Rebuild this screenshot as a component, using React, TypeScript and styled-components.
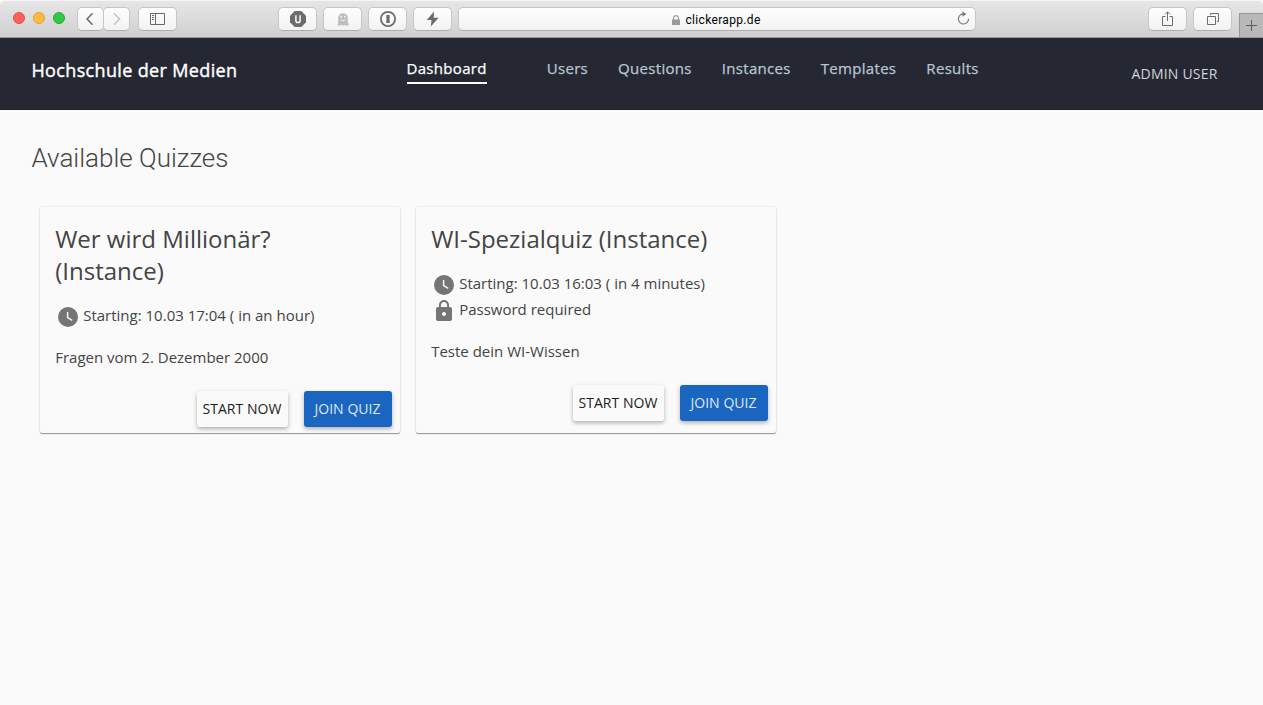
import React from "react";
import styled, { createGlobalStyle } from "styled-components";

const GlobalStyle = createGlobalStyle`
  * { box-sizing: border-box; }
  body { margin: 0; background: #fafafa; font-family: "Open Sans", sans-serif; color: #444; }
`;

const Page = styled.div`
  min-height: 705px;
  display: flex;
  flex-direction: column;
  background: #fafafa;
`;

const Toolbar = styled.div`
  height: 38px;
  display: flex;
  align-items: flex-start;
  border-top: 1px solid #f5f5f5;
  border-bottom: 1px solid #969696;
  border-radius: 5px 5px 0 0;
  background: linear-gradient(#e6e6e6, #d0d0d0);
`;

const Lights = styled.div`
  display: flex;
  gap: 8px;
  padding: 11px 0 0 13px;
  width: 77px;
`;

const Light = styled.span<{ $fill: string; $edge: string }>`
  width: 12px;
  height: 12px;
  border-radius: 50%;
  background: ${(p) => p.$fill};
  border: 1px solid ${(p) => p.$edge};
`;

const ToolButton = styled.button<{ $width?: number; $left?: number }>`
  width: ${(p) => p.$width ?? 39}px;
  height: 24px;
  margin: 6px 0 0 ${(p) => p.$left ?? 0}px;
  padding: 0;
  display: flex;
  align-items: center;
  justify-content: center;
  flex: none;
  border: 1px solid #c6c6c6;
  border-bottom-color: #adadad;
  border-radius: 5px;
  background: linear-gradient(#fefefe, #f2f2f2);
`;

const AddressBar = styled.div`
  position: relative;
  width: 518px;
  height: 24px;
  margin: 6px 0 0 6px;
  padding: 1px 1px 0 0;
  display: flex;
  align-items: center;
  justify-content: center;
  gap: 5px;
  flex: none;
  border: 1px solid #c6c6c6;
  border-bottom-color: #adadad;
  border-radius: 5px;
  background: linear-gradient(#fefefe, #f2f2f2);
  font: 12px Roboto, sans-serif;
  letter-spacing: 0.33px;
  color: #000;
`;

const Reload = styled.svg`
  position: absolute;
  right: 5px;
  top: 3px;
`;

const NewTab = styled.button`
  width: 24px;
  height: 24px;
  margin: 12px 0 0 auto;
  padding: 0;
  display: flex;
  align-items: center;
  justify-content: center;
  border: solid #969696;
  border-width: 1px 0 0 1px;
  background: #b8b8b8;
`;

const Header = styled.header`
  height: 72px;
  display: flex;
  align-items: flex-start;
  background: #252833;
  border-bottom: 1px solid #1f212c;
`;

const Brand = styled.div`
  width: 375px;
  padding: 20px 0 0 31.5px;
  font-size: 18px;
  line-height: 24px;
  letter-spacing: 0.35px;
  -webkit-text-stroke: 0.4px #fff;
  color: #fff;
`;

const Nav = styled.nav`
  display: flex;
  gap: 30px;
  padding-left: 31.5px;
  padding-top: 20px;
`;

const NavItem = styled.a<{ $active?: boolean }>`
  height: 26px;
  margin-right: ${(p) => (p.$active ? 30 : 0)}px;
  border-bottom: 2px solid ${(p) => (p.$active ? "#fff" : "transparent")};
  color: ${(p) => (p.$active ? "#fff" : "#b9c6d2")};
  font-size: 15px;
  line-height: 21px;
  letter-spacing: 0.31px;
  -webkit-text-stroke: 0.25px currentColor;
  white-space: nowrap;
`;

const User = styled.div`
  margin-left: auto;
  padding: 26px 45.5px 0 0;
  font-size: 14px;
  line-height: 20px;
  letter-spacing: 0.2px;
  color: #d3d4d6;
  white-space: nowrap;
`;

const Main = styled.main`
  padding: 32px;
`;

const Heading = styled.h1`
  margin: 0 0 0 -0.5px;
  font: 300 26px/32px Roboto, sans-serif;
  color: #444;
`;

const Cards = styled.div`
  display: flex;
  gap: 16px;
  padding: 33px 8px 0;
`;

const Card = styled.article`
  width: 360px;
  padding: 16px 0 6px;
  border-radius: 2px;
  box-shadow: 0 1px 1px rgba(0, 0, 0, 0.38), 0 0 2px rgba(0, 0, 0, 0.16);
`;

const CardTitle = styled.h2`
  width: 300px;
  margin: 0 0 15px 15.2px;
  font-size: 24px;
  line-height: 32px;
  font-weight: 400;
`;

const Info = styled.div`
  height: 26px;
  padding-left: 15.5px;
  display: flex;
  align-items: center;
  gap: 3.7px;
  font-size: 15px;
  white-space: nowrap;

  svg { margin-top: 3px; }
`;

const Description = styled.p`
  margin: 17px 0 0 15.2px;
  font-size: 15px;
  line-height: 24px;
`;

const Actions = styled.div`
  display: flex;
  justify-content: flex-end;
  gap: 16px;
  padding: 22px 8px 0 0;
`;

const Button = styled.button<{ $primary?: boolean }>`
  width: ${(p) => (p.$primary ? 88 : 91)}px;
  height: 36px;
  padding: 0 1px 1px 0;
  border: 0;
  border-radius: 3px;
  background: ${(p) => (p.$primary ? "#1a65c0" : "#fafafa")};
  color: ${(p) => (p.$primary ? "#dfe9f6" : "#212121")};
  box-shadow: 0 2px 4px rgba(0, 0, 0, 0.3);
  font: 14px "Open Sans", sans-serif;
  letter-spacing: 0.05px;
  white-space: nowrap;
`;

const Clock = () => (
  <svg width="24" height="24" viewBox="0 0 24 24">
    <circle cx="12" cy="12" r="10" fill="#757575" />
    <path d="M11.6 7v5.6l4.6 2.7" fill="none" stroke="#fafafa" strokeWidth="1.5" />
  </svg>
);

const Padlock = () => (
  <svg width="24" height="24" viewBox="0 0 24 24">
    <path
      fill="#757575"
      d="M18 8h-1V6c0-2.76-2.24-5-5-5S7 3.24 7 6v2H6c-1.1 0-2 .9-2 2v10c0 1.1.9 2 2 2h12c1.1 0 2-.9 2-2V10c0-1.1-.9-2-2-2zm-6 9c-1.1 0-2-.9-2-2s.9-2 2-2 2 .9 2 2-.9 2-2 2zm3.1-9H8.9V6c0-1.71 1.39-3.1 3.1-3.1 1.71 0 3.1 1.39 3.1 3.1v2z"
    />
  </svg>
);

const Chevron = ({ d, color }: { d: string; color: string }) => (
  <svg width="9" height="14" viewBox="0 0 9 14" fill="none" stroke={color} strokeWidth="1.6">
    <path d={d} />
  </svg>
);

type Quiz = { title: string; starting: string; locked?: boolean; description: string };

const quizzes: Quiz[] = [
  {
    title: "Wer wird Millionär? (Instance)",
    starting: "Starting: 10.03 17:04 ( in an hour)",
    description: "Fragen vom 2. Dezember 2000",
  },
  {
    title: "WI-Spezialquiz (Instance)",
    starting: "Starting: 10.03 16:03 ( in 4 minutes)",
    locked: true,
    description: "Teste dein WI-Wissen",
  },
];

const navItems = ["Dashboard", "Users", "Questions", "Instances", "Templates", "Results"];

const BrowserBar = () => (
  <Toolbar>
    <Lights>
      <Light $fill="#fc605b" $edge="#e0504b" />
      <Light $fill="#fdbc40" $edge="#dfa033" />
      <Light $fill="#30c846" $edge="#25ab36" />
    </Lights>
    <ToolButton $width={27}>
      <Chevron d="M6.6 1.2L1 7l5.6 5.8" color="#6c6c6c" />
    </ToolButton>
    <ToolButton $width={27} $left={-1}>
      <Chevron d="M2 1.2L7.6 7 2 12.8" color="#c4c4c4" />
    </ToolButton>
    <ToolButton $left={8}>
      <svg width="15" height="12" viewBox="0 0 15 12" fill="none" stroke="#686868">
        <path d="M.5.5h14v11H.5zM5.5.5v11M2 2.5h2M2 4.5h2M2 6.5h2" />
      </svg>
    </ToolButton>
    <ToolButton $left={101}>
      <svg width="16" height="16" viewBox="0 0 16 16">
        <path d="M4.7 0h6.6L16 4.7v6.6L11.3 16H4.7L0 11.3V4.7z" fill="#6c6c6c" />
        <path d="M5.9 4.3v5.1a2.1 2.1 0 0 0 4.2 0V4.3" fill="none" stroke="#fafafa" strokeWidth="1.5" />
      </svg>
    </ToolButton>
    <ToolButton $left={6}>
      <svg width="12" height="13" viewBox="0 0 12 13">
        <path d="M1.2 5a4.8 4.8 0 0 1 9.6 0v4.5l1 3H8.7l-1-.6-1.3.9-1.6-.9-1.3.6H.2l1-3z" fill="#bdbdbd" />
        <path d="M4.2 2.8v2M7.8 2.8v2" stroke="#f8f8f8" strokeWidth="1.4" />
        <path d="M3.4 6.5c1.4 1.8 3.8 1.8 5.2 0" fill="none" stroke="#f8f8f8" />
      </svg>
    </ToolButton>
    <ToolButton $left={6}>
      <svg width="16" height="16" viewBox="0 0 16 16">
        <circle cx="8" cy="8" r="7.1" fill="none" stroke="#6c6c6c" strokeWidth="1.8" />
        <path d="M6.3 4h3.4v3.2l-.6.7.6.7V12H6.3V8.8l.6-.7-.6-.7z" fill="#6c6c6c" />
      </svg>
    </ToolButton>
    <ToolButton $left={6}>
      <svg width="13" height="16" viewBox="0 0 13 16">
        <path d="M8 .5L.8 9h4.7l-.7 6.5L12.6 6.7H7.7z" fill="#6c6c6c" />
      </svg>
    </ToolButton>
    <AddressBar>
      <svg width="8" height="10" viewBox="0 0 8 10">
        <path d="M0 4.5h8V10H0z" fill="#9a9a9a" />
        <path d="M1.6 5V3a2.4 2.4 0 0 1 4.8 0v2" fill="none" stroke="#9a9a9a" strokeWidth="1.1" />
      </svg>
      <span>clickerapp.de</span>
      <Reload width="13" height="15" viewBox="0 0 13 15">
        <path d="M6.3 2.8A5.1 5.1 0 1 0 11.6 7.8" fill="none" stroke="#7b7b7b" strokeWidth="1.2" />
        <path d="M5.5.5l4 2.6-4 2.7z" fill="#7b7b7b" />
      </Reload>
    </AddressBar>
    <ToolButton $left={172}>
      <svg width="11" height="16" viewBox="0 0 11 16" fill="none" stroke="#6c6c6c">
        <path d="M3.5 5.5h-3v9h10v-9h-3M5.5 10V1M3 3.3L5.5.8 8 3.3" />
      </svg>
    </ToolButton>
    <ToolButton $left={6}>
      <svg width="12" height="12" viewBox="0 0 12 12" fill="none" stroke="#6c6c6c">
        <path d="M.5 3.5h8v8h-8zM3.5 2V.5h8v8H10" />
      </svg>
    </ToolButton>
    <NewTab>
      <svg width="11" height="11" viewBox="0 0 11 11" stroke="#5c5c5c">
        <path d="M5.5 0v11M0 5.5h11" />
      </svg>
    </NewTab>
  </Toolbar>
);

export default function App() {
  return (
    <Page>
      <GlobalStyle />
      <BrowserBar />
      <Header>
        <Brand>Hochschule der Medien</Brand>
        <Nav>
          {navItems.map((item, i) => (
            <NavItem key={item} $active={i === 0}>{item}</NavItem>
          ))}
        </Nav>
        <User>ADMIN USER</User>
      </Header>
      <Main>
        <Heading>Available Quizzes</Heading>
        <Cards>
          {quizzes.map((quiz) => (
            <Card key={quiz.title}>
              <CardTitle>{quiz.title}</CardTitle>
              <Info><Clock />{quiz.starting}</Info>
              {quiz.locked && <Info><Padlock />Password required</Info>}
              <Description>{quiz.description}</Description>
              <Actions>
                <Button>START NOW</Button>
                <Button $primary>JOIN QUIZ</Button>
              </Actions>
            </Card>
          ))}
        </Cards>
      </Main>
    </Page>
  );
}
